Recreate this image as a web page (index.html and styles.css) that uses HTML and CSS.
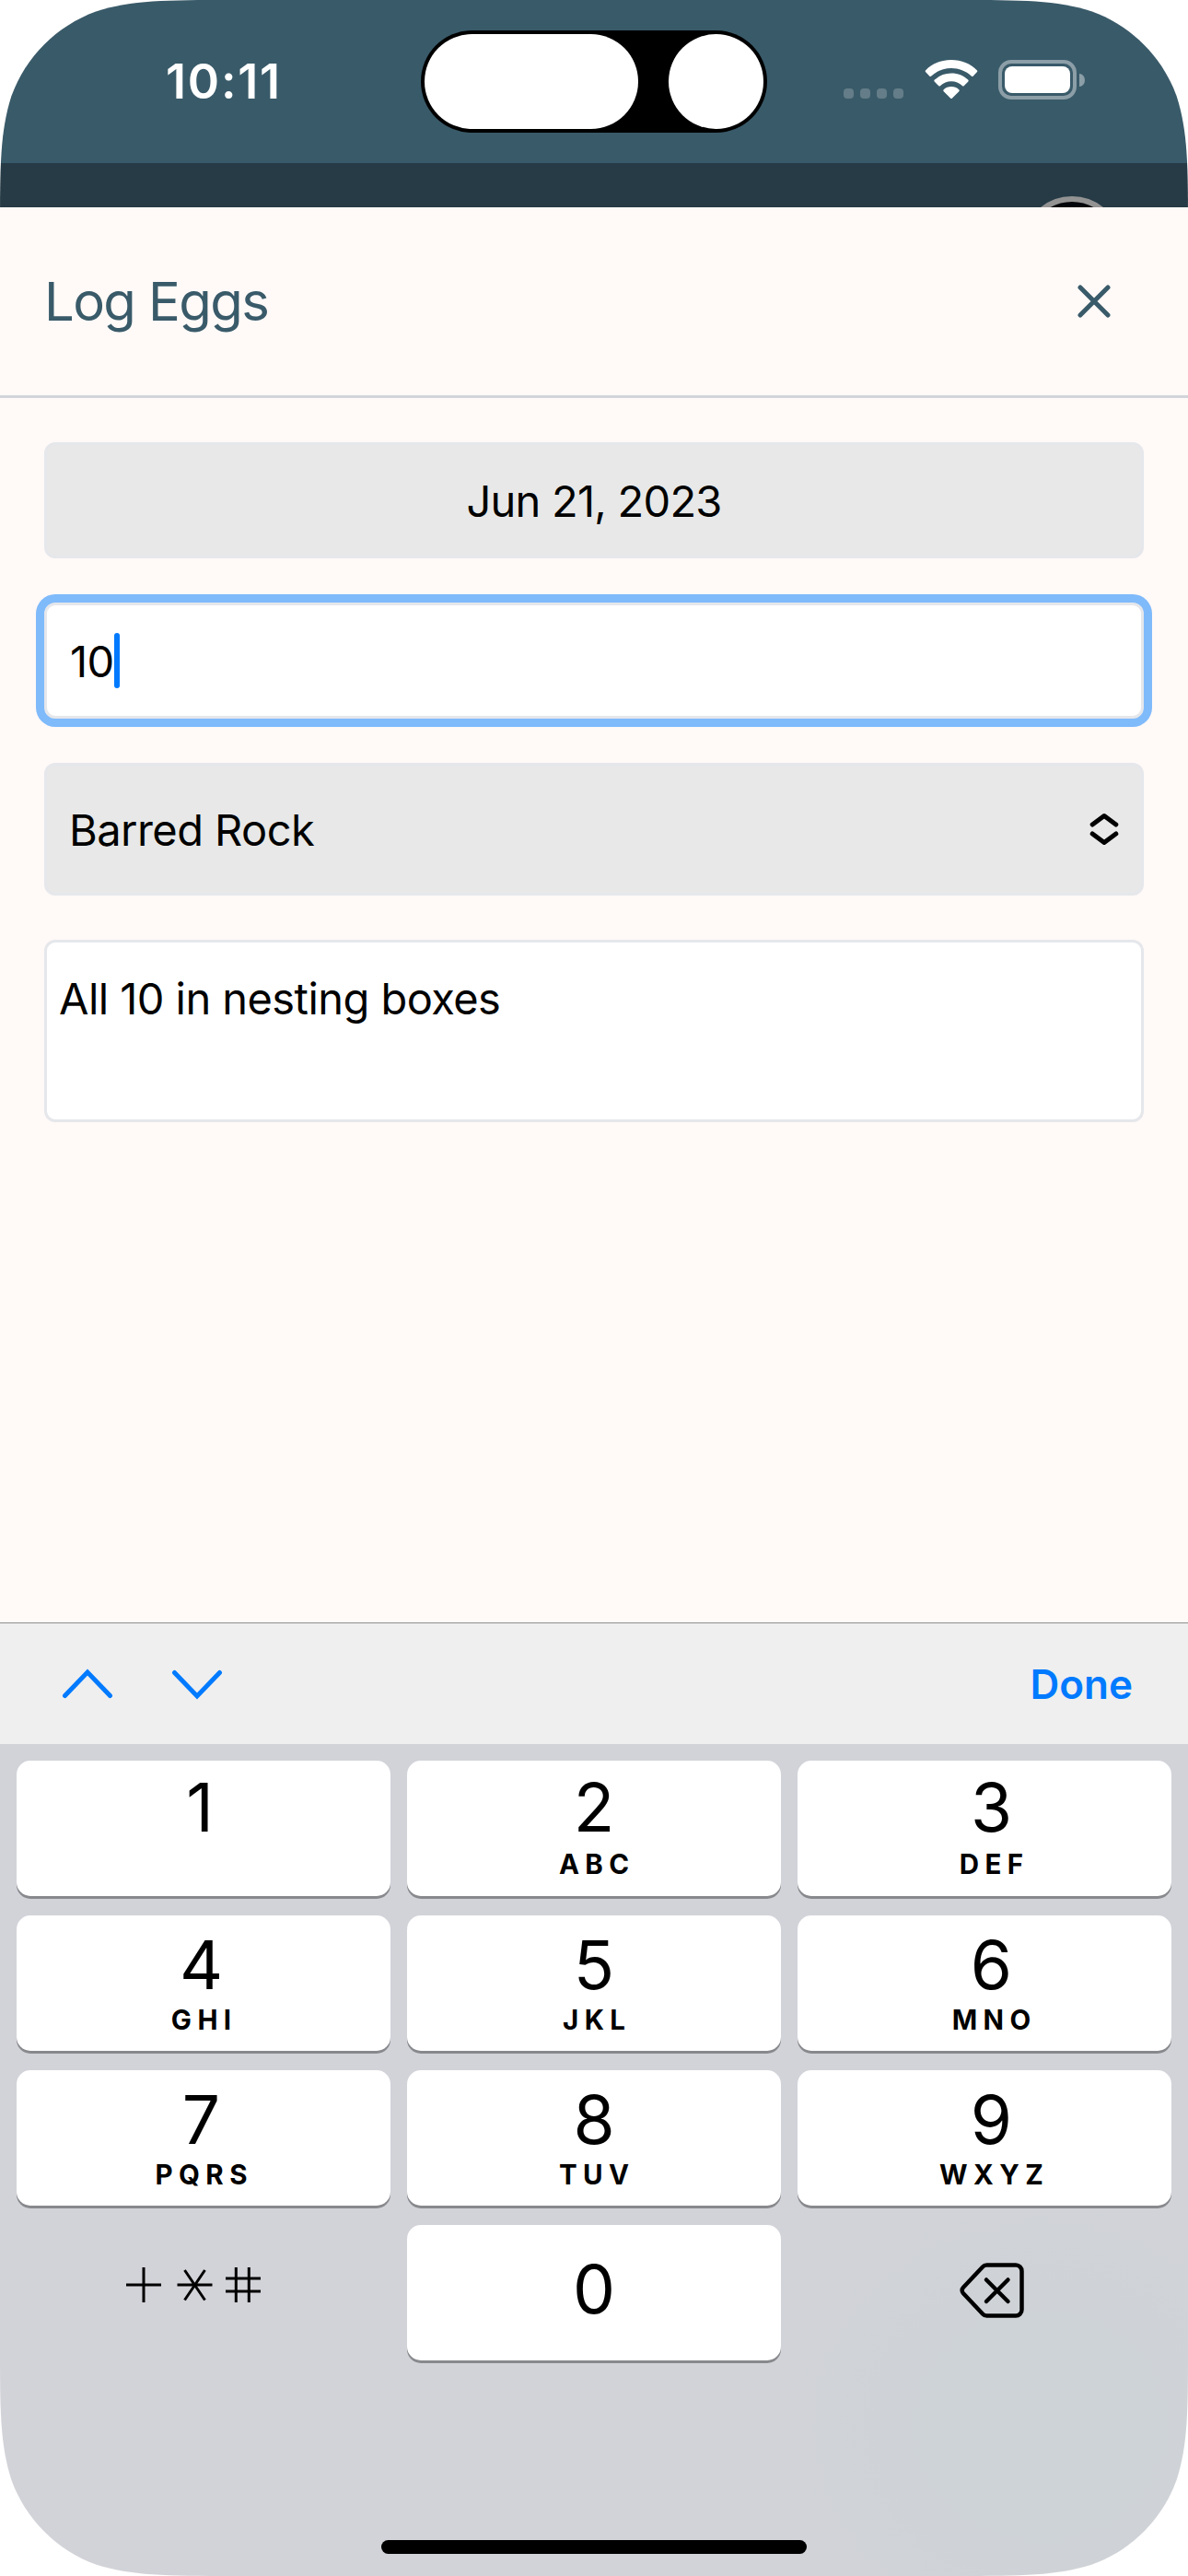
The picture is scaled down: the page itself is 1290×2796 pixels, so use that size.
FILE: index.html
```html
<!DOCTYPE html>
<html lang="en">
<head>
<meta charset="utf-8">
<title>Log Eggs</title>
<link rel="stylesheet" href="styles.css">
</head>
<body>
<main class="phone">
  <header class="status">
    <div class="time">10:11</div>
    <div class="island"><span class="pill"></span><span class="lens"></span></div>
    <div class="indicators">
      <div class="cell"><i></i><i></i><i></i><i></i></div>
      <svg class="wifi" width="58" height="44" viewBox="0 0 58 44">
        <path d="M29 1C18 1 8 5 1.200 12.200a1.500 1.500 0 0 0 0 2.100l4 4.200a1.500 1.500 0 0 0 2.100 0C13 13 21 10 29 10s16 3 21.700 8.500a1.500 1.500 0 0 0 2.100 0l4-4.200a1.500 1.500 0 0 0 0-2.100C50 5 40 1 29 1z"/>
        <path d="M29 15.600c-7 0-13.300 2.600-18.100 7a1.500 1.500 0 0 0 0 2.200l4.200 4.200a1.500 1.500 0 0 0 2.100 0C20.400 26 24.500 24.300 29 24.300s8.600 1.700 11.800 4.700a1.500 1.500 0 0 0 2.100 0l4.200-4.200a1.500 1.500 0 0 0 0-2.200c-4.800-4.400-11.100-7-18.100-7z"/>
        <path d="M29 30c-3.200 0-6.100 1.200-8.300 3.200a1.400 1.400 0 0 0 0 2l7.300 7.400a1.400 1.400 0 0 0 2 0l7.300-7.400a1.400 1.400 0 0 0 0-2C35.100 31.200 32.200 30 29 30z"/>
      </svg>
      <div class="battery"><div class="shell"><span class="level"></span></div><span class="nub"></span></div>
    </div>
  </header>
  <div class="backdrop"><span class="avatar"></span></div>
  <section class="sheet">
    <div class="sheet-head">
      <h1 class="title">Log Eggs</h1>
      <svg class="close" width="36" height="36" viewBox="0 0 36 36"><path d="M3 3l30 30M33 3L3 33"/></svg>
    </div>
    <form class="form">
      <div class="field date"><span class="date-text">Jun 21, 2023</span></div>
      <div class="field count"><span class="count-text">10</span><span class="caret"></span></div>
      <div class="field breed"><span class="breed-text">Barred Rock</span>
        <svg class="updown" width="34" height="40" viewBox="0 0 34 40"><path d="M4.200 15L17 5.500 29.800 15M4.200 25L17 34.500 29.800 25"/></svg>
      </div>
      <div class="field notes"><span class="notes-text">All 10 in nesting boxes</span></div>
    </form>
  </section>
  <nav class="accessory">
    <svg class="arrow" width="56" height="34" viewBox="0 0 56 34"><path d="M3.500 29.500L28 4l24.500 25.500"/></svg>
    <svg class="arrow" width="56" height="34" viewBox="0 0 56 34"><path d="M3.500 4.500L28 30 52.500 4.500"/></svg>
    <span class="done">Done</span>
  </nav>
  <section class="keyboard">
    <div class="keys">
      <div class="key first one"><b>1</b></div>
      <div class="key first"><b>2</b><small>ABC</small></div>
      <div class="key first right"><b>3</b><small>DEF</small></div>
      <div class="key left"><b>4</b><small>GHI</small></div>
      <div class="key"><b>5</b><small>JKL</small></div>
      <div class="key right"><b>6</b><small>MNO</small></div>
      <div class="key left"><b>7</b><small>PQRS</small></div>
      <div class="key"><b>8</b><small>TUV</small></div>
      <div class="key right"><b>9</b><small>WXYZ</small></div>
      <div class="plain symbols">
        <svg width="148" height="40" viewBox="0 0 148 40"><path d="M1 20h38M20 1v38M56.500 20h38M64.500 4l22 32.500M86.500 4l-22 32.500M109 13h38M109 27h38M120.300 1v38M134.300 1v38"/></svg>
      </div>
      <div class="key zero"><b>0</b></div>
      <div class="plain erase">
        <svg width="70" height="60" viewBox="0 0 70 60"><path d="M29.500 2.500H61a6.500 6.500 0 0 1 6.500 6.500v42a6.500 6.500 0 0 1-6.500 6.500H29.500a6 6 0 0 1-4.500-2L3.800 33a4.500 4.500 0 0 1 0-6L25 4.500a6 6 0 0 1 4.500-2zM29 18.500l23.500 23.500M52.500 18.500L29 42"/></svg>
      </div>
    </div>
    <div class="home"></div>
  </section>
</main>
</body>
</html>
```
FILE: styles.css
```css
* { box-sizing: border-box; }
body { margin: 0; background: #fff; font-family: Inter, "Liberation Sans", sans-serif; color: #000; }
.phone {
  width: 1290px; height: 2796px; display: flex; flex-direction: column; overflow: hidden; background: #fff9f7;
  clip-path: path("M252 0H1038C1110.400 0 1146.700 0 1185.800 12.400C1228.500 27.900 1262.100 61.500 1277.600 104.200C1290 143.300 1290 179.600 1290 252V2544C1290 2616.400 1290 2652.700 1277.600 2691.800C1262.100 2734.500 1228.500 2768.100 1185.800 2783.600C1146.700 2796 1110.400 2796 1038 2796H252C179.600 2796 143.300 2796 104.200 2783.600C61.500 2768.100 27.900 2734.500 12.400 2691.800C0 2652.700 0 2616.400 0 2544V252C0 179.600 0 143.300 12.400 104.200C27.900 61.500 61.500 27.900 104.200 12.400C143.300 0 179.600 0 252 0Z");
}
.status { height: 177px; flex: none; background: #395a69; display: flex; align-items: flex-start; }
.time { width: 457px; padding: 57px 0 0 180px; font-size: 52px; line-height: 64px; font-weight: 600; color: #fff; letter-spacing: 1.800px; white-space: nowrap; }
.island { width: 376px; height: 111px; margin-top: 33px; padding: 4px; border-radius: 56px; background: #000; display: flex; justify-content: space-between; }
.pill, .lens { height: 103px; border-radius: 52px; background: #fff; }
.pill { width: 232px; }
.lens { width: 103px; }
.indicators { display: flex; margin: 64px 0 0 83px; }
.cell { display: flex; gap: 7px; padding-top: 32px; width: 88px; }
.cell i { width: 11px; height: 11px; border-radius: 4px; background: #647d88; }
.wifi { fill: #fff; display: block; }
.battery { display: flex; align-items: center; gap: 3px; margin: 1px 0 0 22px; height: 43px; }
.shell { width: 85px; height: 43px; border: 4px solid #8c9ea7; border-radius: 14px; padding: 3px; }
.level { display: block; height: 29px; border-radius: 8px; background: #fff; }
.nub { width: 6px; height: 14px; background: #8c9ea7; border-radius: 0 6px 6px 0 / 0 7px 7px 0; }
.backdrop { height: 48px; flex: none; background: #263b46; overflow: hidden; padding: 36px 0 0 1110px; }
.avatar { display: block; width: 108px; height: 108px; border: 6px solid #939393; border-radius: 50%; background: #03060a; }
.sheet { height: 1536px; flex: none; }
.sheet-head { height: 207px; border-bottom: 3px solid #d1d5db; display: flex; justify-content: space-between; align-items: center; padding: 0 84px 0 48px; }
.title { margin: 0; font-size: 58px; line-height: 72px; font-weight: 400; color: #395a69; letter-spacing: -1.600px; }
.close { fill: none; stroke: #395a69; stroke-width: 5; stroke-linecap: round; }
.form { padding: 48px; display: flex; flex-direction: column; gap: 48px; }
.field { height: 126px; border: 3px solid #e5e7eb; border-radius: 12px; background: #fff; display: flex; align-items: center; font-size: 47px; line-height: 60px; white-space: nowrap; letter-spacing: -0.550px; }
.date { background: #e8e8e8; justify-content: center; padding-top: 2px; letter-spacing: -0.750px; }
.count { padding-left: 25px; box-shadow: 0 0 0 9px #7fbafb; letter-spacing: -0.500px; }
.count-text { padding-top: 2px; }
.caret { width: 6px; height: 60px; border-radius: 3px; background: #007aff; }
.breed { height: 144px; padding: 0 23px 0 24px; background: #e8e8e8; justify-content: space-between; }
.breed-text { padding-top: 2px; }
.updown { fill: none; stroke: #000; stroke-width: 5; stroke-linecap: round; stroke-linejoin: round; }
.notes { height: 198px; align-items: flex-start; padding: 31px 13px; }
.accessory { height: 132px; flex: none; border-top: 1px solid #8f8f8f; background: #efefef; display: flex; align-items: center; gap: 63px; padding: 0 60px 0 67px; }
.arrow { fill: none; stroke: #007aff; stroke-width: 5; stroke-linecap: round; stroke-linejoin: miter; }
.done { margin-left: auto; padding-top: 1px; font-size: 44px; line-height: 56px; font-weight: 600; color: #007aff; }
.keyboard { flex: 1; padding: 18px 18px 0; background: radial-gradient(ellipse 330px 300px at 1130px 740px, #cdd3d6 0, #cdd3d6 20%, #d2d3d9 100%); }
.keys { display: grid; grid-template-columns: repeat(3, 406px); grid-auto-rows: 147px; gap: 21px 18px; }
.key { background: #fff; border-radius: 15px; box-shadow: 0 3px 0 #88898d; display: flex; flex-direction: column; align-items: center; padding-top: 18px; }
.key.first { padding-top: 15px; }
.key.zero { padding-top: 34px; }
.key.right { padding-left: 15px; }
.key.left { padding-right: 5px; }
.key.one { padding-right: 8px; }
.key b { font-size: 73px; line-height: 72px; font-weight: 400; }
.key small { font-size: 29.500px; line-height: 36px; font-weight: 700; letter-spacing: 6.400px; margin: 5px -6.400px 0 0; }
.key.first small { margin-top: 7px; }
.plain { display: flex; }
.symbols { padding: 45px 0 0 118px; }
.erase { padding: 41px 0 0 176px; }
.plain svg { fill: none; stroke: #000; stroke-width: 3; }
.erase svg { stroke-width: 4.500; stroke-linecap: round; }
.home { width: 462px; height: 15px; margin: 195px auto 0; border-radius: 8px; background: #000; }
```
